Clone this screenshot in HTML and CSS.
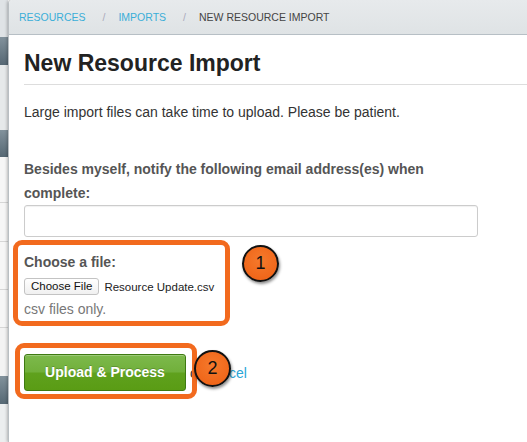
FILE: index.html
```html
<!DOCTYPE html>
<html>
<head>
<meta charset="utf-8">
<link rel="stylesheet" href="styles.css">
</head>
<body>
<div class="app">
  <div class="sidebar">
    <div class="s s-light1"></div>
    <div class="s s-dark"></div>
    <div class="s s-light2"></div>
    <div class="s s-dark s-dark2"></div>
    <div class="s s-row"></div>
    <div class="s s-row s-row2"></div>
    <div class="s s-row s-row3"></div>
    <div class="s s-row s-row4"></div>
    <div class="s s-gap"></div>
    <div class="s s-dark s-dark3"></div>
    <div class="s s-rest"></div>
  </div>
  <div class="panel">
    <div class="crumbs">
      <a class="crumb-link">RESOURCES</a>
      <span class="sep">/</span>
      <a class="crumb-link">IMPORTS</a>
      <span class="sep">/</span>
      <span class="crumb-current">NEW RESOURCE IMPORT</span>
    </div>
    <div class="content">
      <h1 class="title">New Resource Import</h1>
      <p class="intro">Large import files can take time to upload. Please be patient.</p>
      <label class="field-label">Besides myself, notify the following email address(es) when complete:</label>
      <input class="text-input" type="text">
      <div class="file-group">
        <div class="field-label file-label">Choose a file:</div>
        <div class="file-row">
          <span class="file-btn">Choose File</span>
          <span class="file-name">Resource Update.csv</span>
        </div>
        <div class="hint">csv files only.</div>
        <div class="note-box note-box-1"></div>
        <div class="badge badge-1">1</div>
      </div>
      <div class="actions">
        <span class="submit">Upload &amp; Process</span>
        <span class="or">or <a class="cancel">cancel</a></span>
        <div class="note-box note-box-2"></div>
        <div class="badge badge-2">2</div>
      </div>
    </div>
  </div>
</div>
</body>
</html>
```
FILE: styles.css
```css
html, body {
  margin: 0;
  padding: 0;
  background: #ffffff;
  font-family: "Liberation Sans", Arial, sans-serif;
}
.app {
  display: flex;
  height: 442px;
  overflow: hidden;
}
.sidebar {
  width: 8px;
  flex: none;
  display: flex;
  flex-direction: column;
  background: #eceeef;
}
.s { flex: none; }
.s-light1 { height: 37px; background: #dfe3e6; }
.s-dark { height: 28px; background: linear-gradient(#82929c, #566874); }
.s-light2 { height: 65px; background: #e6e9ea; }
.s-dark2 { height: 27px; }
.s-row { height: 45px; background: #f6f6f6; border-bottom: 1px solid #d6d6d6; }
.s-row2 { height: 38px; }
.s-row3 { height: 47px; }
.s-row4 { height: 37px; }
.s-gap { height: 48px; background: #f3f3f3; }
.s-dark3 { height: 28px; }
.s-rest { flex: 1; background: #eceeef; }

.panel {
  flex: 1;
  background: #ffffff;
  border-left: 1px solid #b9bfc3;
  border-top-left-radius: 4px;
  box-shadow: -1px 0 3px rgba(0, 0, 0, 0.25);
  overflow: hidden;
}
.crumbs {
  height: 35px;
  box-sizing: border-box;
  background: linear-gradient(#e7eaec, #dfe3e5);
  border-bottom: 1px solid #b7bfc5;
  display: flex;
  align-items: center;
  padding-left: 10px;
  font-size: 10.5px;
  color: #444;
}
.crumb-link { color: #3aaed8; }
.sep { color: #aab; margin: 0 13px 0 17px; }
.crumb-current { color: #444; }

.content {
  padding-left: 15px;
}
.title {
  margin: 14px 0 0 0;
  font-size: 23px;
  line-height: 28px;
  font-weight: bold;
  color: #222;
  padding-bottom: 7px;
  border-bottom: 1px solid #dddddd;
}
.intro {
  margin: 17px 0 0 0;
  font-size: 14px;
  line-height: 20px;
  color: #333;
}
.field-label {
  display: block;
  margin-top: 35px;
  width: 420px;
  font-size: 14px;
  line-height: 24px;
  font-weight: bold;
  color: #555;
}
.text-input {
  display: block;
  margin: 0;
  width: 454px;
  height: 32px;
  box-sizing: border-box;
  border: 1px solid #cccccc;
  border-radius: 3px;
  background: #fff;
  box-shadow: inset 0 1px 1px rgba(0,0,0,0.06);
}

.file-group {
  position: relative;
  margin-top: 14px;
  width: 210px;
}
.file-label {
  margin-top: 0;
  line-height: 22px;
}
.file-row {
  display: flex;
  align-items: center;
  margin-top: 5px;
}
.file-btn {
  height: 17px;
  box-sizing: border-box;
  padding: 0 6px;
  border: 1px solid #c3c3c3;
  border-radius: 3px;
  background: linear-gradient(#ffffff, #f0f0f0);
  font-size: 11.5px;
  line-height: 15px;
  color: #111;
}
.file-name {
  margin-left: 5px;
  font-size: 11.5px;
  color: #222;
}
.hint {
  margin-top: 4px;
  font-size: 14px;
  line-height: 20px;
  color: #777;
}
.note-box {
  position: absolute;
  border: 5px solid #f26a1e;
  border-radius: 9px;
}
.note-box-1 {
  left: -11px;
  top: -11px;
  width: 207px;
  height: 76px;
}
.badge {
  position: absolute;
  width: 33px;
  height: 33px;
  border: 2px solid #111;
  border-radius: 50%;
  background: radial-gradient(circle at 50% 40%, #f57a2c, #ee5f13);
  box-shadow: 1px 2px 3px rgba(0, 0, 0, 0.45);
  color: #111;
  font-size: 18px;
  line-height: 33px;
  text-align: center;
}
.badge-1 {
  left: 218px;
  top: -6px;
}

.actions {
  position: relative;
  margin-top: 35px;
  display: flex;
  align-items: center;
}
.submit {
  width: 162px;
  height: 37px;
  box-sizing: border-box;
  border: 1px solid #3e7a12;
  border-radius: 3px;
  background: linear-gradient(#7db94c 0%, #71b03b 48%, #5fa11d 52%, #5a9c15 100%);
  box-shadow: inset 0 1px 0 rgba(255,255,255,0.25);
  color: #fff;
  font-size: 14px;
  font-weight: bold;
  line-height: 35px;
  text-align: center;
  text-shadow: 0 -1px 0 rgba(0,0,0,0.2);
}
.or {
  margin-left: 4px;
  font-size: 14px;
  color: #333;
}
.cancel { color: #2ba6d6; }
.note-box-2 {
  left: -9px;
  top: -11px;
  width: 172px;
  height: 46px;
}
.badge-2 {
  left: 170px;
  top: -4px;
}
```
